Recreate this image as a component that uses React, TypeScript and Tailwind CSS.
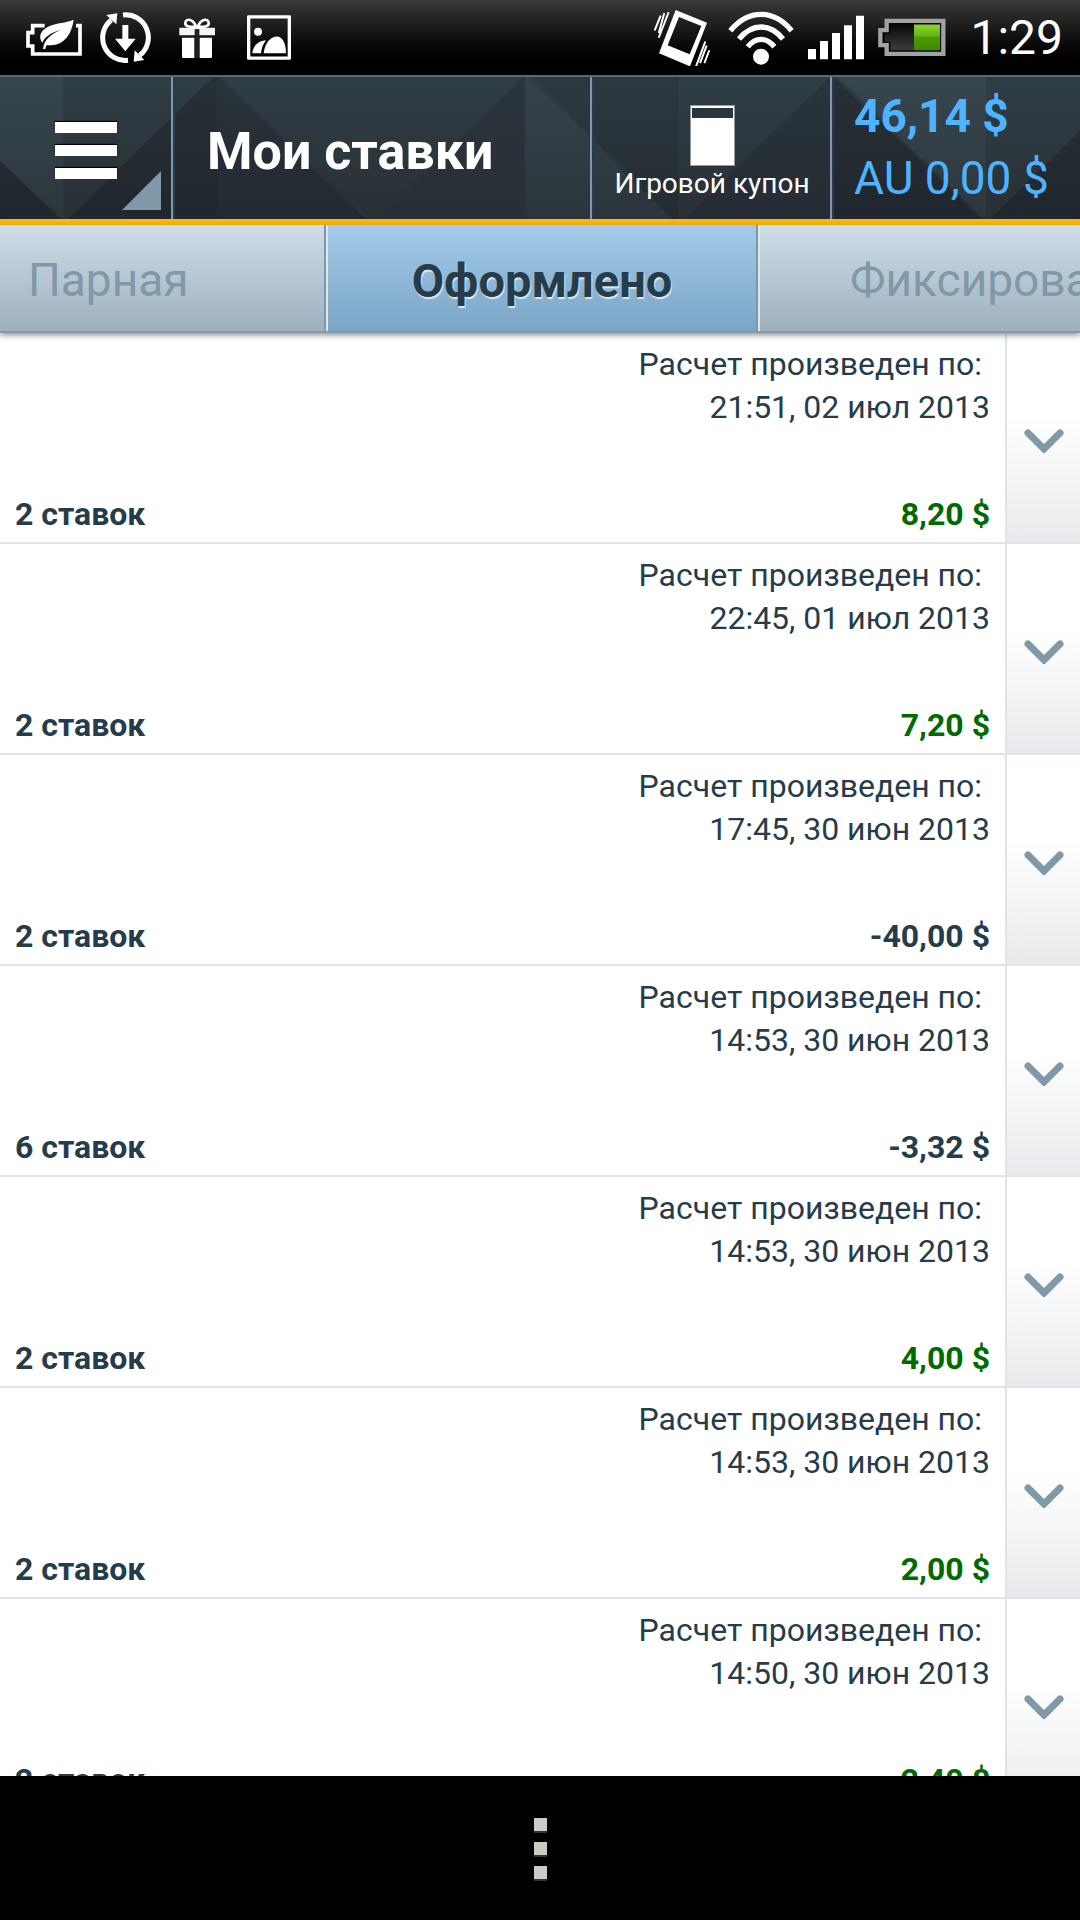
import type { ReactNode } from "react";

type Bet = {
  id: number;
  date: string;
  count: number;
  amount: string;
  won: boolean;
};

const bets: Bet[] = [
  { id: 1, date: "21:51, 02 июл 2013", count: 2, amount: "8,20 $", won: true },
  { id: 2, date: "22:45, 01 июл 2013", count: 2, amount: "7,20 $", won: true },
  { id: 3, date: "17:45, 30 июн 2013", count: 2, amount: "-40,00 $", won: false },
  { id: 4, date: "14:53, 30 июн 2013", count: 6, amount: "-3,32 $", won: false },
  { id: 5, date: "14:53, 30 июн 2013", count: 2, amount: "4,00 $", won: true },
  { id: 6, date: "14:53, 30 июн 2013", count: 2, amount: "2,00 $", won: true },
  { id: 7, date: "14:50, 30 июн 2013", count: 2, amount: "2,40 $", won: true },
];

const EcoBatteryIcon = () => (
  <svg className="h-9 w-14" viewBox="78 54 168 108" fill="none">
    <path
      d="M134 71H98v21H84v40h14v24h142V71h-12"
      stroke="white"
      strokeWidth="11"
    />
    <path
      d="M221 53c-22 10-50 10-72 19-26 11-36 32-22 50 8-18 25-30 55-39-28 13-50 29-53 58h7c1-6 2-9 5-12 50 6 74-32 80-76z"
      fill="white"
      stroke="#161615"
      strokeWidth="4"
      paintOrder="stroke"
    />
  </svg>
);

const SyncIcon = () => (
  <svg className="h-[51px] w-[51px]" viewBox="302 36 153 153" fill="none">
    <path d="M371 45a68 68 0 0 1 50 121" stroke="white" strokeWidth="15" />
    <path d="M386 181a68 68 0 0 1-50-121" stroke="white" strokeWidth="15" />
    <path d="M321 45l33-5-3 33zM403 185l3-34 29 29z" fill="white" />
    <path d="M369 75h18v41h22l-31 38-31-38h22z" fill="white" />
  </svg>
);

const GiftIcon = () => (
  <svg className="h-10 w-9" viewBox="540 54 108 120" fill="none">
    <path
      d="M591 80c-20 2-34-2-32-12 3-14 24-12 32 12zM597 80c20 2 34-2 32-12-3-14-24-12-32 12z"
      stroke="white"
      strokeWidth="8"
    />
    <path d="M541 83h46v23h-46zM601 83h47v23h-47zM587 83h14v5h-14z" fill="#f4f4f4" />
    <path d="M549 113h37v61h-33q-4 0-4-4zM602 113h37v57q0 4-4 4h-33z" fill="white" />
    <path d="M589 88h10v86h-10z" fill="#222" />
  </svg>
);

const PictureIcon = () => (
  <svg className="h-[45px] w-11" viewBox="744 47 132 134" fill="white">
    <path fillRule="evenodd" d="M748 47h124q4 0 4 4v126q0 4-4 4H748q-4 0-4-4V51q0-4 4-4zM754 57v114h112V57z" />
    <circle cx="777" cy="97" r="12" />
    <path d="M760 161c2-22 18-38 41-38-9 10-13 22-15 38zM794 161c4-30 20-50 40-50 16 0 27 20 27 50z" />
  </svg>
);

const VibrateIcon = () => (
  <svg className="h-14 w-14" viewBox="42 29 168 168" fill="none">
    <path fillRule="evenodd" fill="white" d="M107 29l94 38-51 131-93-39zM117 50l-34 85 66 27 35-85z" />
    <path
      d="M61 48L45 88M72 41L57 96M85 38L57 110M195 126l-26 70M199 138l-18 48M207 152l-13 34"
      stroke="white"
      strokeWidth="6"
      strokeLinecap="round"
    />
  </svg>
);

const WifiIcon = () => (
  <svg className="h-[54px] w-[66px]" viewBox="264 31 198 162" fill="none">
    <circle cx="363" cy="168" r="24" fill="white" />
    <path
      d="M271 90Q312 41 363 41T455 90M297 115Q327 79 363 79T429 115M323 138Q342 116 363 116T403 138"
      stroke="white"
      strokeWidth="16"
    />
  </svg>
);

const SignalIcon = () => (
  <svg className="h-[45px] w-14" viewBox="507 52 168 133" fill="white">
    <path d="M507 153h24v31h-24zM543 129h24v55h-24zM579 105h24v79h-24zM615 82h24v102h-24zM651 53h24v131h-24z" />
  </svg>
);

const BatteryIcon = () => (
  <svg className="h-[39px] w-[68px]" viewBox="717 55 204 116">
    <defs>
      <linearGradient id="charge" x1="0" y1="0" x2="0" y2="1">
        <stop offset="0" stopColor="#8ad42c" />
        <stop offset=".45" stopColor="#66b414" />
        <stop offset=".5" stopColor="#4a9c00" />
        <stop offset="1" stopColor="#3f8800" />
      </linearGradient>
      <linearGradient id="cell" x1="0" y1="0" x2="0" y2="1">
        <stop offset="0" stopColor="#0a0a0a" />
        <stop offset="1" stopColor="#3c3c3c" />
      </linearGradient>
    </defs>
    <path d="M743 63h170v99H743v-26h-19V91h19z" fill="#050505" stroke="#a2a2a2" strokeWidth="13" />
    <path d="M754 75h150v76H754v-25h-17v-24h17z" fill="url(#cell)" />
    <path d="M825 74h78v77h-78z" fill="url(#charge)" />
  </svg>
);

const CouponIcon = () => (
  <svg className="h-[61px] w-[45px]" viewBox="0 0 45 61">
    <rect width="45" height="61" fill="#8d9aa3" />
    <rect x="1" y="1" width="43" height="59" fill="white" />
    <rect x="2" y="3" width="41" height="10" fill="#2a363e" />
  </svg>
);

const ChevronIcon = () => (
  <svg className="h-6 w-10" viewBox="0 0 40 24" fill="none">
    <path d="M4 4l16 16L36 4" stroke="#8098a8" strokeWidth="7" strokeLinecap="round" />
  </svg>
);

// Folded paper texture behind the app bar
const HeaderTexture = () => (
  <svg
    className="absolute inset-0 h-full w-full"
    viewBox="0 0 1080 144"
    preserveAspectRatio="none"
    aria-hidden="true"
  >
    <defs>
      <linearGradient id="light" x1="0" y1="0" x2="0" y2="144" gradientUnits="userSpaceOnUse">
        <stop offset="0" stopColor="#37464f" />
        <stop offset="1" stopColor="#2c373c" />
      </linearGradient>
      <linearGradient id="middle" x1="0" y1="0" x2="0" y2="144" gradientUnits="userSpaceOnUse">
        <stop offset="0" stopColor="#2f3d45" />
        <stop offset="1" stopColor="#293036" />
      </linearGradient>
      <linearGradient id="dark" x1="0" y1="0" x2="0" y2="144" gradientUnits="userSpaceOnUse">
        <stop offset="0" stopColor="#283137" />
        <stop offset="1" stopColor="#20262d" />
      </linearGradient>
    </defs>
    <rect width="1080" height="144" fill="url(#middle)" />
    <path d="M0 0h63v144L0 86z" fill="url(#light)" />
    <path d="M0 86l60 58H0zM68 144L215 0h2v144z" fill="url(#dark)" />
    <path d="M217 0l149 144H217z" fill="url(#dark)" opacity=".7" />
    <path d="M372 144h6L525 0v144z" fill="#2a2e36" opacity=".6" />
    <path d="M525 0l149 144H525z" fill="url(#light)" opacity=".7" />
    <path d="M530 0h148v144h-4z" fill="url(#dark)" opacity=".4" />
    <path d="M600 74l72 70h13L832 0v144H678V0h-1v144z" fill="#20262d" opacity=".35" />
    <path d="M832 0l150 144H832z" fill="url(#dark)" />
    <path d="M836 0h150v144h-2z" fill="url(#light)" />
    <path d="M986 144h4l90-88v88z" fill="url(#dark)" />
  </svg>
);

const StatusBar = () => (
  <div className="flex h-[75px] shrink-0 items-center justify-between bg-linear-to-b from-[#3a3a38] to-black pr-[17px] pl-[26px]">
    <div className="flex items-center">
      <EcoBatteryIcon />
      <div className="ml-[18px]">
        <SyncIcon />
      </div>
      <div className="ml-7">
        <GiftIcon />
      </div>
      <div className="ml-8">
        <PictureIcon />
      </div>
    </div>
    <div className="flex items-center">
      <VibrateIcon />
      <div className="ml-[18px]">
        <WifiIcon />
      </div>
      <div className="ml-[14px]">
        <SignalIcon />
      </div>
      <div className="ml-[14px]">
        <BatteryIcon />
      </div>
      <span className="ml-6 text-5xl leading-none text-white">1:29</span>
    </div>
  </div>
);

const Header = () => (
  <header className="relative h-[150px] shrink-0 border-b-6 border-[#ffb80c]">
    <HeaderTexture />
    <div className="relative flex h-full border-t-2 border-[#5b686f] text-white">
      <button
        type="button"
        aria-label="Меню"
        className="relative flex w-[173px] shrink-0 items-center justify-center border-r-2 border-[#8098a8] pt-1"
      >
        <span className="flex flex-col gap-3">
          <span className="h-[11px] w-[62px] bg-white shadow-[0_-1px_1px_#000]" />
          <span className="h-[11px] w-[62px] bg-white shadow-[0_-1px_1px_#000]" />
          <span className="h-[11px] w-[62px] bg-white shadow-[0_-1px_1px_#000]" />
        </span>
        <svg className="absolute right-[10px] bottom-[9px] h-[39px] w-[39px]" viewBox="0 0 39 39">
          <path d="M39 0v39H0z" fill="#8098a8" />
        </svg>
      </button>
      <div className="flex min-w-0 flex-1 items-center border-r-2 border-l-2 border-r-[#8098a8] border-l-[#263c49] pt-2 pl-8">
        <h1 className="text-[52px] leading-none font-bold whitespace-nowrap">Мои ставки</h1>
      </div>
      <button
        type="button"
        className="flex w-[240px] shrink-0 flex-col items-center border-r-2 border-l-2 border-r-[#8098a8] border-l-[#263c49] pt-7"
      >
        <CouponIcon />
        <span className="text-[28px] leading-9 whitespace-nowrap">Игровой купон</span>
      </button>
      <div className="w-[248px] shrink-0 border-l-2 border-[#263c49] pt-2 pl-5 text-[46px] leading-[62px] text-[#4eb4ff]">
        <p className="font-bold whitespace-nowrap">46,14 $</p>
        <p className="whitespace-nowrap">AU 0,00 $</p>
      </div>
    </div>
  </header>
);

const Tab = ({
  active = false,
  className,
  children,
}: {
  active?: boolean;
  className: string;
  children: ReactNode;
}) => (
  <button
    type="button"
    role="tab"
    aria-selected={active}
    className={`overflow-hidden bg-linear-to-b pt-1 leading-none whitespace-nowrap ${
      active
        ? "from-[#a4cbe9] to-[#7ba5c6] text-[47px] font-bold text-[#273c4a] [text-shadow:1px_2px_1px_#dfe9f0]"
        : "from-[#cedfe8] to-[#9eb0be] text-[46px] text-[#8098a8]"
    } ${className}`}
  >
    {children}
  </button>
);

const Tabs = () => (
  <div
    role="tablist"
    className="relative z-10 flex h-27 shrink-0 gap-[2px] border-b-2 border-[#8798a4] bg-[#8098a8] shadow-[0_2px_6px_rgba(50,70,85,0.6)]"
  >
    <Tab className="w-[324px] shrink-0 pl-7 text-left">Парная</Tab>
    <Tab active className="w-[430px] shrink-0 border-l-2 border-[#dfe6ea] text-center">
      Оформлено
    </Tab>
    <Tab className="min-w-0 flex-1 border-l-2 border-[#dfe6ea] pl-[90px] text-left">Фиксированная</Tab>
  </div>
);

const BetRow = ({ bet }: { bet: Bet }) => (
  <li className="flex h-[211px] border-b-2 border-[#dfe5e5] text-[32px] text-[#273c4a]">
    <div className="flex min-w-0 flex-1 flex-col justify-between px-[15px] pt-[10px] pb-2">
      <div className="text-right leading-[43px]">
        <p>Расчет произведен по:&nbsp;</p>
        <p>{bet.date}</p>
      </div>
      <div className="flex justify-between leading-10 font-bold">
        <span>{bet.count} ставок</span>
        <span className={bet.won ? "text-[#006a00]" : ""}>{bet.amount}</span>
      </div>
    </div>
    <button
      type="button"
      aria-label="Подробнее"
      className="flex w-[75px] shrink-0 items-center justify-center border-l-2 border-[#dfe5e5] bg-linear-to-b from-white from-40% to-[#e8eaed] pt-[6px]"
    >
      <ChevronIcon />
    </button>
  </li>
);

const App = () => {
  return (
    <div className="flex h-screen flex-col bg-white font-['Roboto',sans-serif]">
      <StatusBar />
      <Header />
      <Tabs />
      <main className="min-h-0 flex-1 overflow-hidden">
        <ul>
          {bets.map((bet) => (
            <BetRow key={bet.id} bet={bet} />
          ))}
        </ul>
      </main>
      <footer className="flex h-36 shrink-0 items-center justify-center bg-black">
        <button type="button" aria-label="Ещё" className="flex flex-col gap-[11px]">
          <span className="h-[13px] w-[13px] bg-[#cdc9c3] shadow-[0_2px_0_#333]" />
          <span className="h-[13px] w-[13px] bg-[#cdc9c3] shadow-[0_2px_0_#333]" />
          <span className="h-[13px] w-[13px] bg-[#cdc9c3] shadow-[0_2px_0_#333]" />
        </button>
      </footer>
    </div>
  );
};

export default App;
